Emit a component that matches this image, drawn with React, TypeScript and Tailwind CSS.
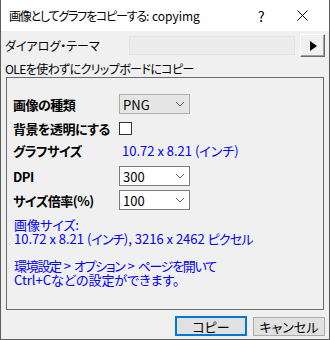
const jp = "font-['Noto_Sans_CJK_JP','Noto_Sans',sans-serif] [font-feature-settings:'palt']";

function Chevron() {
  return (
    <svg width="10" height="6" viewBox="0 0 10 6" className="shrink-0">
      <polyline points="1,1 5,5 9,1" fill="none" stroke="#5a5a5a" strokeWidth="1" />
    </svg>
  );
}

function Combo({ value, readOnly }: { value: string; readOnly?: boolean }) {
  return (
    <div
      className={
        readOnly
          ? "flex h-[20px] w-[71px] items-center justify-between border border-[#adadad] bg-[#e5e5e5] pl-[3px] pr-[4px]"
          : "flex h-[20px] w-[71px] items-center justify-between border border-[#7a7a7a] bg-white pl-[3px] pr-[4px]"
      }
    >
      <span className="text-[13px] leading-none text-black">{value}</span>
      <Chevron />
    </div>
  );
}

function Row({ label, children, className }: { label: string; children: React.ReactNode; className?: string }) {
  return (
    <div className={"flex h-[20px] items-center " + (className ?? "")}>
      <span className="w-[106px] shrink-0 text-[13px] font-bold leading-none tracking-[-0.5px] text-black">{label}</span>
      {children}
    </div>
  );
}

export default function App() {
  return (
    <div className={"flex h-[340px] w-[330px] flex-col border-x border-b border-[#5c5c5c] bg-[#f0f0f0] text-black " + jp}>
      {/* title bar */}
      <div className="flex h-[31px] shrink-0 items-center bg-white pl-[8px]">
        <span className="w-[249px] shrink-0 whitespace-pre text-[12px] leading-none">
          <span className="tracking-[-1.2px]">画像としてグラフをコピーする</span>: copyimg
        </span>
        <span className="w-[39px] shrink-0 text-[14px] leading-none">?</span>
        <svg width="11" height="11" viewBox="0 0 11 11" className="shrink-0">
          <path d="M0.5 0.5 L10.5 10.5 M10.5 0.5 L0.5 10.5" stroke="#000" strokeWidth="1" />
        </svg>
      </div>

      {/* theme row */}
      <div className="mt-[3px] flex h-[23px] items-center pl-[4px] pr-[3px]">
        <span className="w-[124px] shrink-0 text-[12px] leading-none">ダイアログ・テーマ</span>
        <div className="h-[19px] w-[166px] border border-[#e3e3e3] bg-[#ececec]" />
        <button className="ml-[5px] flex h-[23px] w-[25px] items-center justify-center border border-b-[#6d6d6d] border-l-white border-r-[#6d6d6d] border-t-white bg-[#f0f0f0] shadow-[inset_-1px_-1px_0_#a0a0a0]">
          <svg width="8" height="10" viewBox="0 0 8 10">
            <polygon points="1,0 8,5 1,10" fill="#000" />
          </svg>
        </button>
      </div>

      <div className="mt-[5px] pl-[4px] text-[12px] leading-[14px] tracking-[-0.6px]">OLEを使わずにクリップボードにコピー</div>

      {/* group box */}
      <div className="mx-[5px] mt-[1px] flex h-[233px] flex-col border border-[#6b6b6b] pl-[6px] pt-[16px]">
        <Row label="画像の種類">
          <Combo value="PNG" readOnly />
        </Row>
        <Row label="背景を透明にする" className="mt-[4px]">
          <div className="h-[13px] w-[13px] border border-[#333] bg-white" />
        </Row>
        <Row label="グラフサイズ" className="mt-[2px]">
          <span className="pl-[3px] text-[13px] leading-none text-[#0000ff]">10.72 x 8.21 (インチ)</span>
        </Row>
        <Row label="DPI" className="mt-[6px]">
          <Combo value="300" />
        </Row>
        <Row label="サイズ倍率(%)" className="mt-[4px]">
          <Combo value="100" />
        </Row>
        <div className="mt-[8px] whitespace-pre pl-[1px] text-[13px] leading-[14px] text-[#0000ff]">
          <div>画像サイズ:</div>
          <div>
            10.72 x 8.21 (<span className="tracking-[-0.8px]">インチ</span>), 3216 x 2462 <span className="tracking-[-0.8px]">ピクセル</span>
          </div>
          <div className="mt-[13px]">
            <span className="tracking-[-1.3px]">環境設定</span> &gt; <span className="tracking-[-1.3px]">オプション</span> &gt; <span className="tracking-[-1.3px]">ページを開いて</span>
          </div>
          <div>Ctrl+Cなどの設定ができます。</div>
        </div>
      </div>

      {/* buttons */}
      <div className="mt-[6px] flex justify-end gap-[6px] pr-[4px]">
        <button className="flex h-[20px] w-[72px] items-center justify-center border-2 border-[#0078d7] bg-[#e1e1e1] text-[13px] leading-none">
          コピー
        </button>
        <button className="mt-[1px] flex h-[19px] w-[72px] items-center justify-center border border-[#adadad] bg-[#e1e1e1] text-[13px] leading-none">
          キャンセル
        </button>
      </div>
    </div>
  );
}
